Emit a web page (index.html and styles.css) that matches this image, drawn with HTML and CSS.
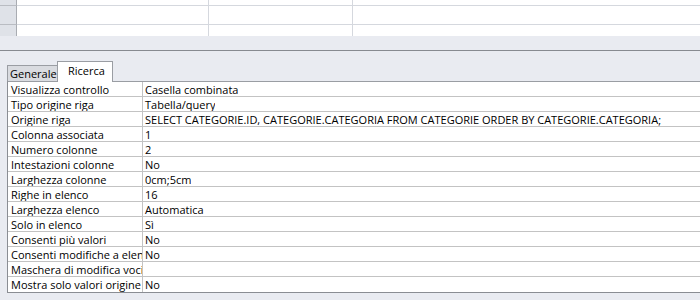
FILE: index.html
```html
<!DOCTYPE html>
<html lang="it">
<head>
    <meta charset="UTF-8">
    <title>Proprietà campo</title>
    <link rel="stylesheet" href="styles.css">
</head>
<body>
    <div class="datasheet">
        <div class="sel"></div><div class="cell"></div><div class="cell"></div><div class="cell last"></div>
        <div class="sel"></div><div class="cell"></div><div class="cell"></div><div class="cell last"></div>
        <div class="sel"></div><div class="cell"></div><div class="cell"></div><div class="cell last"></div>
    </div>

    <div class="splitter"></div>

    <div class="tabs">
        <div class="tab">Generale</div>
        <div class="tab active">Ricerca</div>
    </div>

    <div class="sheet">
        <div class="row"><div class="label">Visualizza controllo</div><div class="value">Casella combinata</div></div>
        <div class="row"><div class="label">Tipo origine riga</div><div class="value">Tabella/query</div></div>
        <div class="row"><div class="label">Origine riga</div><div class="value">SELECT CATEGORIE.ID, CATEGORIE.CATEGORIA FROM CATEGORIE ORDER BY CATEGORIE.CATEGORIA;</div></div>
        <div class="row"><div class="label">Colonna associata</div><div class="value">1</div></div>
        <div class="row"><div class="label">Numero colonne</div><div class="value">2</div></div>
        <div class="row"><div class="label">Intestazioni colonne</div><div class="value">No</div></div>
        <div class="row"><div class="label">Larghezza colonne</div><div class="value">0cm;5cm</div></div>
        <div class="row"><div class="label">Righe in elenco</div><div class="value">16</div></div>
        <div class="row"><div class="label">Larghezza elenco</div><div class="value">Automatica</div></div>
        <div class="row"><div class="label">Solo in elenco</div><div class="value">Sì</div></div>
        <div class="row"><div class="label">Consenti più valori</div><div class="value">No</div></div>
        <div class="row"><div class="label">Consenti modifiche a elenco valori</div><div class="value">No</div></div>
        <div class="row"><div class="label">Maschera di modifica voci di elenco</div><div class="value"></div></div>
        <div class="row"><div class="label">Mostra solo valori origine riga</div><div class="value">No</div></div>
    </div>
</body>
</html>
```

FILE: styles.css
```css
* {
    margin: 0;
    padding: 0;
    box-sizing: border-box;
}

:root {
    --background: #e9ebf1;
    --grid-line: #d5d8de;
    --row-line: #c3c3c3;
    --frame: #9a9da3;
    --text: #000000;
}

body {
    font-family: 'Open Sans', 'Noto Sans', sans-serif;
    font-size: 11px;
    color: var(--text);
    background: var(--background);
    width: 700px;
    height: 300px;
    overflow: hidden;
}

/* top datasheet grid */
.datasheet {
    display: grid;
    grid-template-columns: 17px 192px 144px 1fr;
    grid-template-rows: 6px 19px 11px;
    background: #ffffff;
}

.datasheet .sel {
    background: #dfe2e8;
    border-right: 1px solid #a9acb2;
    border-bottom: 1px solid #b9bcc2;
}

.datasheet .cell {
    border-right: 1px solid var(--grid-line);
    border-bottom: 1px solid var(--grid-line);
}

.datasheet .cell.last {
    border-right: none;
}

.datasheet > :nth-last-child(-n+4) {
    border-bottom: none;
}

.splitter {
    margin-top: 14px;
    height: 1px;
    background: #878a90;
}

/* tabs */
.tabs {
    display: flex;
    align-items: flex-end;
    height: 30px;
    padding-left: 7px;
}

.tab {
    height: 16px;
    width: 50px;
    padding-left: 2px;
    line-height: 16px;
    background: #d9dbe0;
    border: 1px solid var(--frame);
    border-bottom: none;
    border-right: none;
    white-space: nowrap;
}

.tab.active {
    height: 21px;
    width: 56px;
    padding-left: 10px;
    line-height: 18px;
    background: #ffffff;
    border-right: 1px solid var(--frame);
    margin-bottom: -1px;
    position: relative;
}

/* property sheet */
.sheet {
    margin-left: 7px;
    border-top: 1px solid var(--frame);
    border-left: 1px solid #8a8d93;
    border-bottom: 1px solid #8a8d93;
    background: #ffffff;
}

.row {
    display: flex;
    height: 15px;
    line-height: 15px;
    border-bottom: 1px solid var(--row-line);
}

.row:last-child {
    border-bottom: none;
}

.label {
    width: 135px;
    flex-shrink: 0;
    padding-left: 3px;
    border-right: 1px solid var(--row-line);
    overflow: hidden;
    white-space: nowrap;
}

.value {
    padding-left: 2px;
    white-space: nowrap;
    overflow: hidden;
}
```
